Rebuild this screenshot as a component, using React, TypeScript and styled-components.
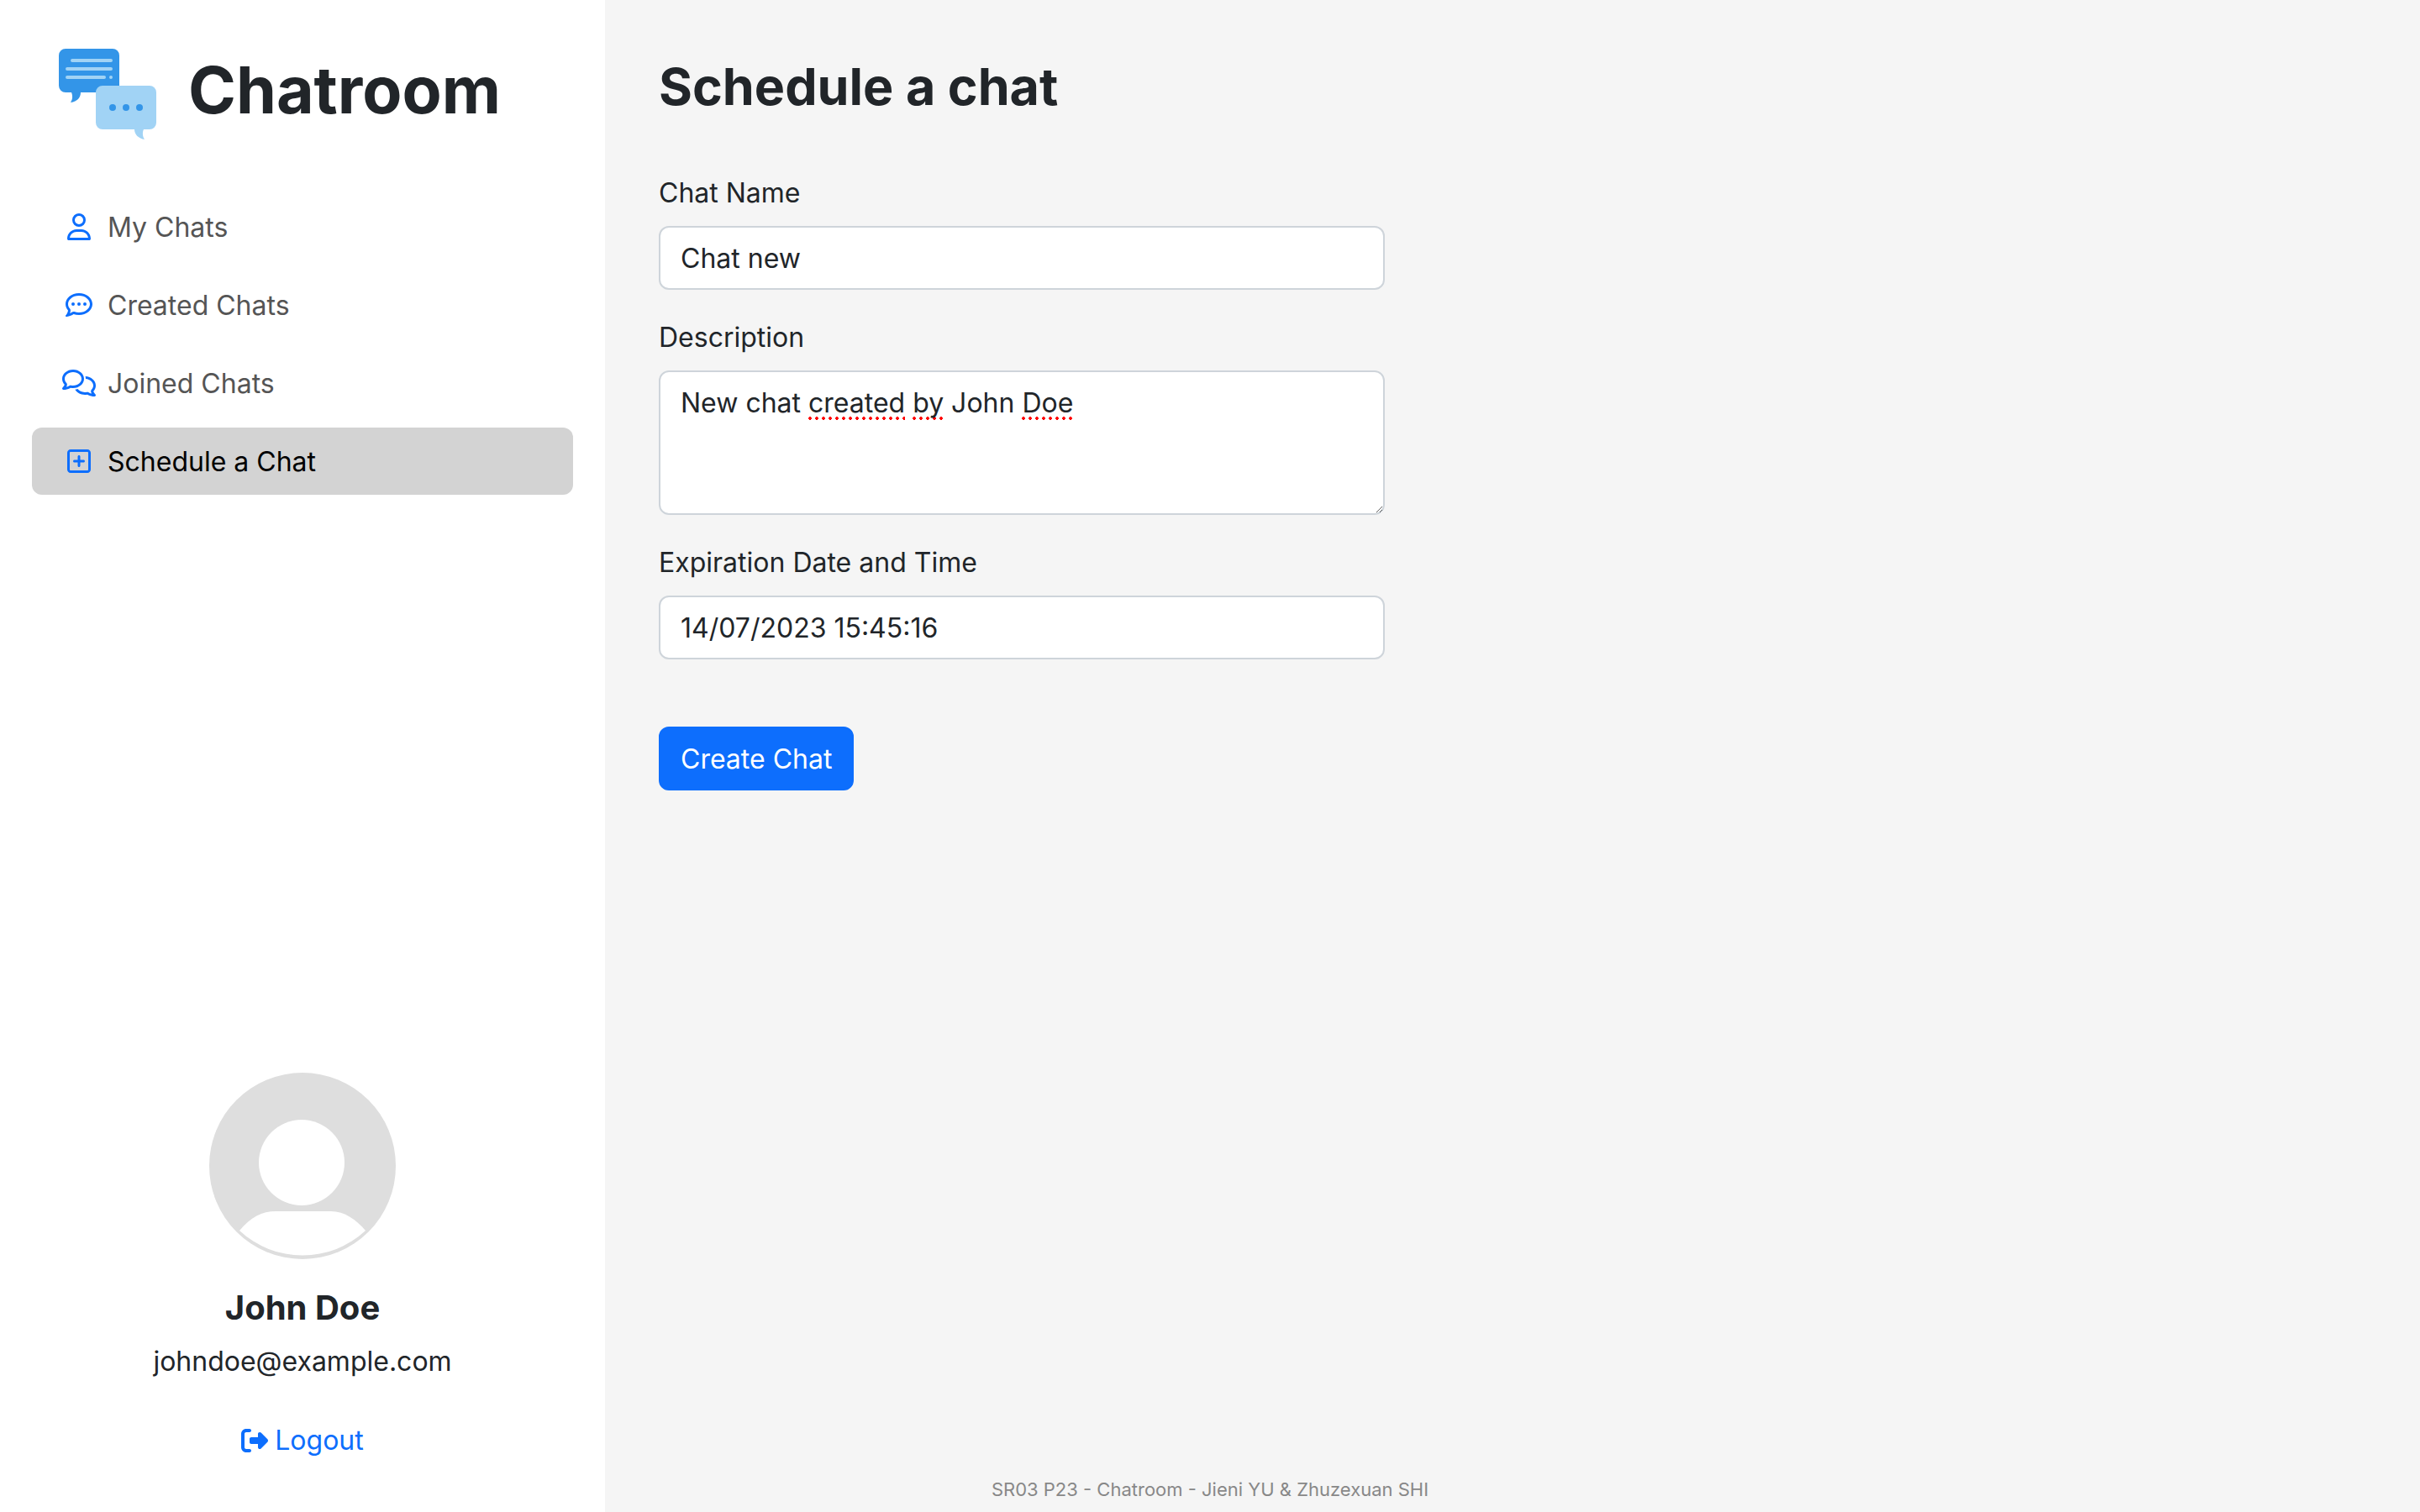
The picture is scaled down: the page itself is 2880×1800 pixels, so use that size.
import React, { useState } from "react";
import styled, { createGlobalStyle } from "styled-components";
import {
  FaRegCommentDots,
  FaRegComments,
  FaRegSquarePlus,
  FaRegUser,
  FaRightFromBracket,
} from "react-icons/fa6";

const font = `Inter, "Liberation Sans", sans-serif`;

const GlobalStyle = createGlobalStyle`
  *, *::before, *::after { box-sizing: border-box; }
  body {
    margin: 0;
    background: #f5f5f5;
    color: #212529;
    font: 400 32px/48px ${font};
  }
  h1, h2, p { margin: 0; }
`;

const Page = styled.div`
  display: grid;
  grid-template-columns: 1fr 3fr;
  grid-template-rows: 1fr auto;
  min-height: 100vh;
`;

const Sidebar = styled.aside`
  grid-column: 1;
  grid-row: 1 / -1;
  display: flex;
  flex-direction: column;
  padding: 58px 38px 61px;
  background: #fff;
`;

const Brand = styled.div`
  display: flex;
  align-items: flex-start;
  gap: 38px;
  padding-left: 32px;
`;

const BrandName = styled.h1`
  font-size: 77px;
  line-height: 98px;
  font-weight: 700;
`;

const Nav = styled.nav`
  display: flex;
  flex-direction: column;
  gap: 13px;
  margin-top: 64px;
`;

const NavLink = styled.a<{ $active?: boolean }>`
  display: flex;
  align-items: center;
  gap: 14px;
  padding: 16px 36px;
  border-radius: 12px;
  color: ${(p) => (p.$active ? "#000" : "#555")};
  background: ${(p) => (p.$active ? "#d3d3d3" : "transparent")};
  text-decoration: none;

  svg {
    width: 40px;
    height: 32px;
    color: #0d6efd;
  }
`;

const NavLabel = styled.span`
  padding-top: 2px;
  line-height: 46px;
`;

const Profile = styled.section`
  display: flex;
  flex-direction: column;
  align-items: center;
  gap: 16px;
  margin-top: auto;
`;

const Avatar = styled.svg`
  width: 224px;
  height: 224px;
  margin-bottom: 17px;
`;

const ProfileName = styled.h2`
  font-size: 40px;
  line-height: 48px;
  font-weight: 700;
`;

const LogoutLink = styled.a`
  display: flex;
  align-items: center;
  gap: 8px;
  margin-top: 30px;
  color: #0d6efd;
  text-decoration: none;

  svg {
    width: 32px;
    height: 32px;
  }
`;

const Main = styled.main`
  grid-column: 2;
  grid-row: 1;
`;

const Form = styled.form`
  display: flex;
  flex-direction: column;
  gap: 32px;
  width: 40%;
  margin: 64px 0 0 64px;
`;

const FormTitle = styled.h2`
  margin-bottom: 32px;
  font-size: 61px;
  line-height: 78px;
  font-weight: 700;
`;

const Field = styled.div`
  display: flex;
  flex-direction: column;
  gap: 15px;

  & + & {
    padding-top: 1px;
  }
`;

const Input = styled.input`
  width: 100%;
  height: 76px;
  padding: 12px 24px;
  border: 2px solid #ced4da;
  border-radius: 12px;
  background: #fff;
  color: inherit;
  font: inherit;
`;

const TextBox = styled.div`
  display: grid;
  background: #fff;
  border-radius: 12px;

  > * {
    grid-area: 1 / 1;
  }
`;

const SpellMarks = styled.div`
  padding: 15px 26px 13px;
  color: transparent;
  white-space: pre-wrap;
`;

const Misspelled = styled.span`
  padding-bottom: 1px;
  background: radial-gradient(circle at 2px 2px, #f00 0 2px, transparent 2px) left bottom / 8px 4px repeat-x;
`;

const TextArea = styled.textarea`
  position: relative;
  display: block;
  width: 100%;
  min-height: 76px;
  padding: 13px 24px 11px;
  border: 2px solid #ced4da;
  border-radius: 12px;
  background: transparent;
  color: inherit;
  font: inherit;
  resize: vertical;
`;

const SubmitButton = styled.button`
  align-self: flex-start;
  margin-top: 48px;
  padding: 13px 24px 11px;
  border: 2px solid #0d6efd;
  border-radius: 12px;
  background: #0d6efd;
  color: #fff;
  font: inherit;
`;

const Footer = styled.footer`
  grid-column: 1 / -1;
  grid-row: 2;
  padding-bottom: 9px;
  color: #888;
  font-size: 22px;
  line-height: 36px;
  text-align: center;
`;

const BrandLogo = () => (
  <svg width="116" height="108" viewBox="0 0 116 108" aria-hidden="true">
    <path
      fill="#3395e8"
      d="M8 0h56a8 8 0 0 1 8 8v44H26c0 6-4 11-12 12 2-3 3-7 1-12H8a8 8 0 0 1-8-8V8a8 8 0 0 1 8-8Z"
    />
    <path
      fill="#a1d3f5"
      d="M52 44h56a8 8 0 0 1 8 8v36a8 8 0 0 1-8 8h-7c-2 4-1 9 1 12-7-1-12-6-12-12H52a8 8 0 0 1-8-8V52a8 8 0 0 1 8-8Z"
    />
    <path
      stroke="#a1d3f5"
      strokeWidth="4"
      strokeLinecap="round"
      d="M16 14h46M10 24h52M10 34h44M62 34h0"
    />
    <g fill="#3395e8">
      <circle cx="64" cy="70" r="4" />
      <circle cx="80" cy="70" r="4" />
      <circle cx="96" cy="70" r="4" />
    </g>
  </svg>
);

const navItems = [
  { label: "My Chats", icon: FaRegUser },
  { label: "Created Chats", icon: FaRegCommentDots },
  { label: "Joined Chats", icon: FaRegComments },
  { label: "Schedule a Chat", icon: FaRegSquarePlus, active: true },
];

const flaggedWords = ["created", "by", "Doe"];

export default function App() {
  const [description, setDescription] = useState("New chat created by John Doe");

  return (
    <>
      <GlobalStyle />
      <Page>
        <Sidebar>
          <Brand>
            <BrandLogo />
            <BrandName>Chatroom</BrandName>
          </Brand>
          <Nav>
            {navItems.map(({ label, icon: Icon, active }) => (
              <NavLink key={label} href="#" $active={active}>
                <Icon aria-hidden="true" />
                <NavLabel>{label}</NavLabel>
              </NavLink>
            ))}
          </Nav>
          <Profile>
            <Avatar viewBox="0 0 224 224" aria-hidden="true">
              <circle cx="112" cy="112" r="111" fill="#dedede" />
              <circle cx="111" cy="108" r="51" fill="#fff" />
              <path fill="#fff" d="M37 189C50 173 64 166 80 166H146C162 166 176 176 187 189A110 110 0 0 1 37 189Z" />
            </Avatar>
            <ProfileName>John Doe</ProfileName>
            <p>johndoe@example.com</p>
            <LogoutLink href="#">
              <FaRightFromBracket aria-hidden="true" />
              Logout
            </LogoutLink>
          </Profile>
        </Sidebar>
        <Main>
          <Form onSubmit={(e) => e.preventDefault()}>
            <FormTitle>Schedule a chat</FormTitle>
            <Field>
              <label htmlFor="name">Chat Name</label>
              <Input id="name" defaultValue="Chat new" />
            </Field>
            <Field>
              <label htmlFor="description">Description</label>
              <TextBox>
                <SpellMarks aria-hidden="true">
                  {description.split(/(\s+)/).map((word, i) =>
                    flaggedWords.includes(word) ? <Misspelled key={i}>{word}</Misspelled> : word
                  )}
                </SpellMarks>
                <TextArea
                  id="description"
                  rows={3}
                  spellCheck={false}
                  value={description}
                  onChange={(e) => setDescription(e.target.value)}
                />
              </TextBox>
            </Field>
            <Field>
              <label htmlFor="expiration">Expiration Date and Time</label>
              <Input id="expiration" defaultValue="14/07/2023 15:45:16" />
            </Field>
            <SubmitButton type="submit">Create Chat</SubmitButton>
          </Form>
        </Main>
        <Footer>SR03 P23 - Chatroom - Jieni YU &amp; Zhuzexuan SHI</Footer>
      </Page>
    </>
  );
}
